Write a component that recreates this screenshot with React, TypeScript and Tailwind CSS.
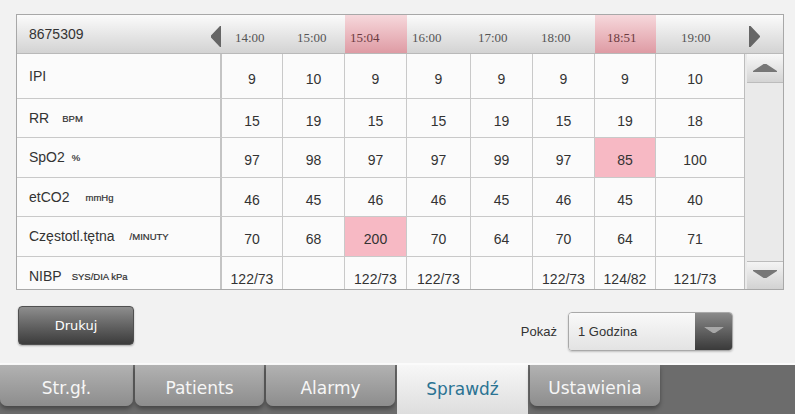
import React from "react";

interface Row {
  label: string;
  unit: string;
  unitGap: string;
  height: string;
  values: string[];
  alert?: number;
}

const colWidths = ["w-[61px]", "w-[62px]", "w-[62px]", "w-[64px]", "w-[62px]", "w-[62px]", "w-[61px]", "w-[88px]"];

const times = [
  { t: "14:00", pad: "pl-[13px]" },
  { t: "15:00", pad: "pl-[14px]" },
  { t: "15:04", pad: "pl-[5px]", hot: true },
  { t: "16:00", pad: "pl-[5px]" },
  { t: "17:00", pad: "pl-[7px]" },
  { t: "18:00", pad: "pl-[8px]" },
  { t: "18:51", pad: "pl-[12px]", hot: true },
  { t: "19:00", pad: "pl-[25px]" },
];

const rows: Row[] = [
  { label: "IPI", unit: "", unitGap: "", height: "h-[45px]", values: ["9", "10", "9", "9", "9", "9", "9", "10"] },
  { label: "RR", unit: "BPM", unitGap: "ml-[13px]", height: "h-[39px]", values: ["15", "19", "15", "15", "19", "15", "19", "18"] },
  { label: "SpO2", unit: "%", unitGap: "ml-[7px]", height: "h-[40px]", values: ["97", "98", "97", "97", "99", "97", "85", "100"], alert: 6 },
  { label: "etCO2", unit: "mmHg", unitGap: "ml-[16px]", height: "h-[39px]", values: ["46", "45", "46", "46", "45", "46", "45", "40"] },
  { label: "Częstotl.tętna", unit: "/MINUTY", unitGap: "ml-[15px]", height: "h-[40px]", values: ["70", "68", "200", "70", "64", "70", "64", "71"], alert: 2 },
  { label: "NIBP", unit: "SYS/DIA kPa", unitGap: "ml-[10px]", height: "h-[40px]", values: ["122/73", "", "122/73", "122/73", "", "122/73", "124/82", "121/73"] },
];

const tabs = [
  { name: "Str.gł.", w: "w-[133px]" },
  { name: "Patients", w: "w-[129px]" },
  { name: "Alarmy", w: "w-[129px]" },
  { name: "Sprawdź", w: "w-[131px]", active: true },
  { name: "Ustawienia", w: "w-[130px]" },
];

function Tri({ dir, className }: { dir: "up" | "down" | "left" | "right"; className: string }) {
  const pts = {
    up: "0,8 12,0 24,8",
    down: "0,0 24,0 12,8",
    left: "10,0 10,21 0,10.5",
    right: "0,0 0,21 10,10.5",
  }[dir];
  const vb = dir === "up" || dir === "down" ? "0 0 24 8" : "0 0 10 21";
  return (
    <svg viewBox={vb} className={className}>
      <polygon points={pts} strokeLinejoin="round" strokeWidth="1.5" className="fill-current stroke-current" />
    </svg>
  );
}

export default function App() {
  return (
    <div className="w-[795px] h-[414px] overflow-hidden bg-[#f2f2f2] font-['Liberation_Sans',Arial,sans-serif] text-[#333]">
      {/* Trend table */}
      <div className="pt-[14px] pl-[16px]">
        <div className="w-[768px] h-[276px] border border-[#a8a8a8] bg-[#fbfbfb] flex flex-col">
          {/* header */}
          <div className="flex h-[39px] shrink-0 bg-gradient-to-b from-[#fbfbfb] to-[#d3d3d3] border-b border-[#b9b9b9]">
            <div className="w-[205px] flex items-center justify-between pl-[12px] pr-[1px]">
              <span className="text-[14px]">8675309</span>
              <Tri dir="left" className="w-[10px] h-[21px] text-[#666] mt-[5px]" />
            </div>
            {times.map((c, i) => (
              <div
                key={c.t}
                className={`${colWidths[i]} ${c.pad} flex items-center pt-[7px] font-['Liberation_Serif',serif] text-[13px] ${
                  c.hot ? "bg-gradient-to-b from-[#f6d8dc] to-[#de9ba4] text-[#6b3a40]" : "text-[#555]"
                }`}
              >
                {c.t}
              </div>
            ))}
            <div className="flex-1 flex items-center pl-[5px] pt-[4px]">
              <Tri dir="right" className="w-[11px] h-[21px] text-[#666]" />
            </div>
          </div>

          {/* body */}
          <div className="flex flex-1 min-h-0">
            <div className="w-[727px] overflow-hidden">
              {rows.map((r) => (
                <div key={r.label} className={`flex ${r.height} border-b border-[#c9c9c9]`}>
                  <div className="w-[205px] shrink-0 flex items-center pl-[12px] border-r-2 border-[#c4c4c4]">
                    <span className="text-[14px]">{r.label}</span>
                    {r.unit && <span className={`${r.unitGap} text-[9.5px] text-[#2f2f2f] mt-[2px] [-webkit-text-stroke:0.2px_#2f2f2f]`}>{r.unit}</span>}
                  </div>
                  {r.values.map((v, i) => (
                    <div
                      key={i}
                      className={`${colWidths[i]} shrink-0 flex items-center justify-center pt-[6px] text-[14px] ${
                        i < 7 ? "border-r border-[#c9c9c9]" : "pr-[10px]"
                      } ${r.alert === i ? "bg-[#f7b9c4]" : ""}`}
                    >
                      {v}
                    </div>
                  ))}
                </div>
              ))}
            </div>
            {/* scrollbar */}
            <div className="flex-1 flex flex-col border-l border-[#bdbdbd] bg-[#eaeaea]">
              <div className="h-[29px] ml-[2px] flex items-center justify-center bg-gradient-to-b from-[#f8f8f8] to-[#d4d4d4] border-b border-[#bcbcbc]">
                <Tri dir="up" className="w-[24px] h-[8px] text-[#777]" />
              </div>
              <div className="flex-1" />
              <div className="h-[28px] ml-[2px] flex items-center justify-center bg-gradient-to-b from-[#f4f4f4] to-[#d2d2d2] border-t border-[#bcbcbc]">
                <Tri dir="down" className="w-[24px] h-[8px] text-[#777] -mt-[3px]" />
              </div>
            </div>
          </div>
        </div>
      </div>

      {/* controls */}
      <div className="h-[75px] flex items-start border-b-[2px] border-[#fbfbfb]">
        <button className="mt-[16px] ml-[18px] w-[116px] h-[39px] rounded-[4px] border border-[#505050] bg-gradient-to-b from-[#8e8e8e] to-[#3c3c3c] text-white text-[13px] font-['DejaVu_Sans',sans-serif] shadow-[0_1px_2px_rgba(0,0,0,0.3)]">
          Drukuj
        </button>
        <div className="ml-auto mr-[62px] mt-[22px] flex items-center">
          <span className="text-[13px] mr-[11px]">Pokaż</span>
          <div className="flex h-[39px] w-[165px] rounded-[4px] border border-[#a9a9a9] overflow-hidden shadow-[0_1px_2px_rgba(0,0,0,0.2)]">
            <div className="flex-1 flex items-center pl-[9px] text-[13px] bg-gradient-to-b from-[#f9f9f9] to-[#e3e3e3]">1 Godzina</div>
            <div className="w-[37px] flex items-start justify-center pt-[14px] bg-gradient-to-b from-[#8a8a8a] to-[#3a3a3a]">
              <Tri dir="down" className="w-[20px] h-[6px] text-[#a8a8a8]" />
            </div>
          </div>
        </div>
      </div>

      {/* tab bar */}
      <div className="h-[49px] flex items-start gap-[2px] bg-[#6c6c6c] font-['DejaVu_Sans',sans-serif] text-[17px]">
        {tabs.map((t) =>
          t.active ? (
            <div
              key={t.name}
              className={`${t.w} h-full flex items-center justify-center pt-[1px] bg-gradient-to-b from-[#f7f7f7] to-[#dedede] text-[#2b7393]`}
            >
              {t.name}
            </div>
          ) : (
            <div
              key={t.name}
              className={`${t.w} h-[41px] flex items-center justify-center pt-[7px] rounded-b-[7px] bg-gradient-to-b from-[#b2b2b2] to-[#8d8d8d] text-[#f6f6f6] shadow-[0_3px_4px_rgba(0,0,0,0.35)]`}
            >
              {t.name}
            </div>
          )
        )}
      </div>
    </div>
  );
}
